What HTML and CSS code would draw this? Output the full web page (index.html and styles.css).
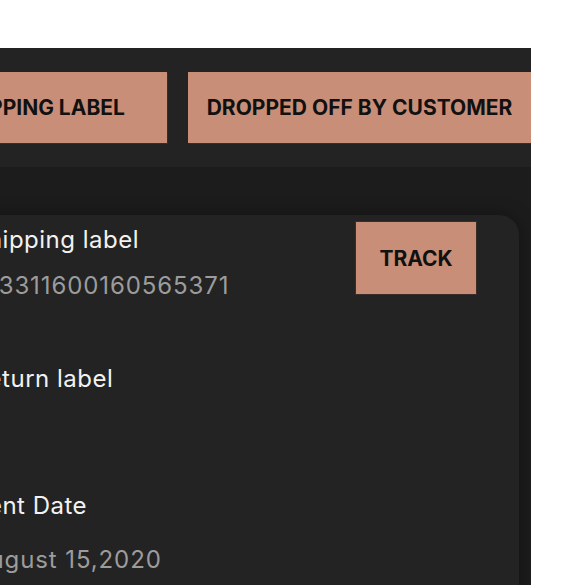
FILE: index.html
```html
<!DOCTYPE html>
<html lang="en">
<head>
<meta charset="utf-8">
<title>Shipment</title>
<link rel="stylesheet" href="styles.css">
</head>
<body>
<div class="panel">
  <div class="toolbar">
    <button class="action">CREATE SHIPPING LABEL</button>
    <button class="action">DROPPED OFF BY CUSTOMER</button>
  </div>
  <div class="content">
    <div class="card">
      <div class="card-top">
        <div class="field">
          <div class="label">Shipping label</div>
          <div class="value">1Z3311600160565371</div>
        </div>
        <button class="track">TRACK</button>
      </div>
      <div class="field field-return">
        <div class="label">Return label</div>
      </div>
      <div class="field field-date">
        <div class="label">Sent Date</div>
        <div class="value">August 15,2020</div>
      </div>
    </div>
  </div>
</div>
</body>
</html>
```

FILE: styles.css
```css
html, body {
  margin: 0;
  padding: 0;
  background: #ffffff;
}

body {
  font-family: Inter, "Noto Sans", sans-serif;
  overflow: hidden;
}

.panel {
  margin-top: 48px;
  width: 531px;
  height: 537px;
  overflow: hidden;
  background: #1c1c1c;
}

.toolbar {
  display: flex;
  gap: 21px;
  margin-left: -176px;
  padding: 24px 0;
  background: #232323;
}

.action {
  flex: 1 1 0;
  height: 71px;
  border: 0;
  background: #c98e77;
  box-shadow: 1px 1px 0 #3a2d28;
  color: #111111;
  font-family: Inter, sans-serif;
  font-weight: 700;
  font-size: 21px;
  white-space: nowrap;
  text-align: center;
  padding: 0;
}

.content {
  margin-left: -52px;
  padding: 48px 12px 0 0;
}

.card {
  background: #232323;
  border-radius: 20px;
  box-shadow: 0 0 18px rgba(0, 0, 0, 0.35);
  padding: 7px 43px 40px 24px;
  display: flex;
  flex-direction: column;
}

.card-top {
  display: flex;
  justify-content: space-between;
  align-items: flex-start;
}

.card-top .field {
  padding-top: 3px;
}

.field {
  display: flex;
  flex-direction: column;
  gap: 17px;
}

.field-return {
  margin-top: 64px;
}

.field-date {
  margin-top: 98px;
  gap: 25px;
}

.label,
.value {
  font-size: 24px;
  line-height: 29px;
  letter-spacing: 0.5px;
  white-space: nowrap;
}

.label {
  color: #f2f2f2;
}

.value {
  color: #9c9c9c;
  letter-spacing: 0.9px;
}

.track {
  width: 120px;
  height: 72px;
  border: 0;
  background: #c98e77;
  box-shadow: 0 0 0 1px #3a2d28;
  color: #111111;
  font-family: Inter, sans-serif;
  font-weight: 700;
  font-size: 21px;
  padding: 0;
}
```
